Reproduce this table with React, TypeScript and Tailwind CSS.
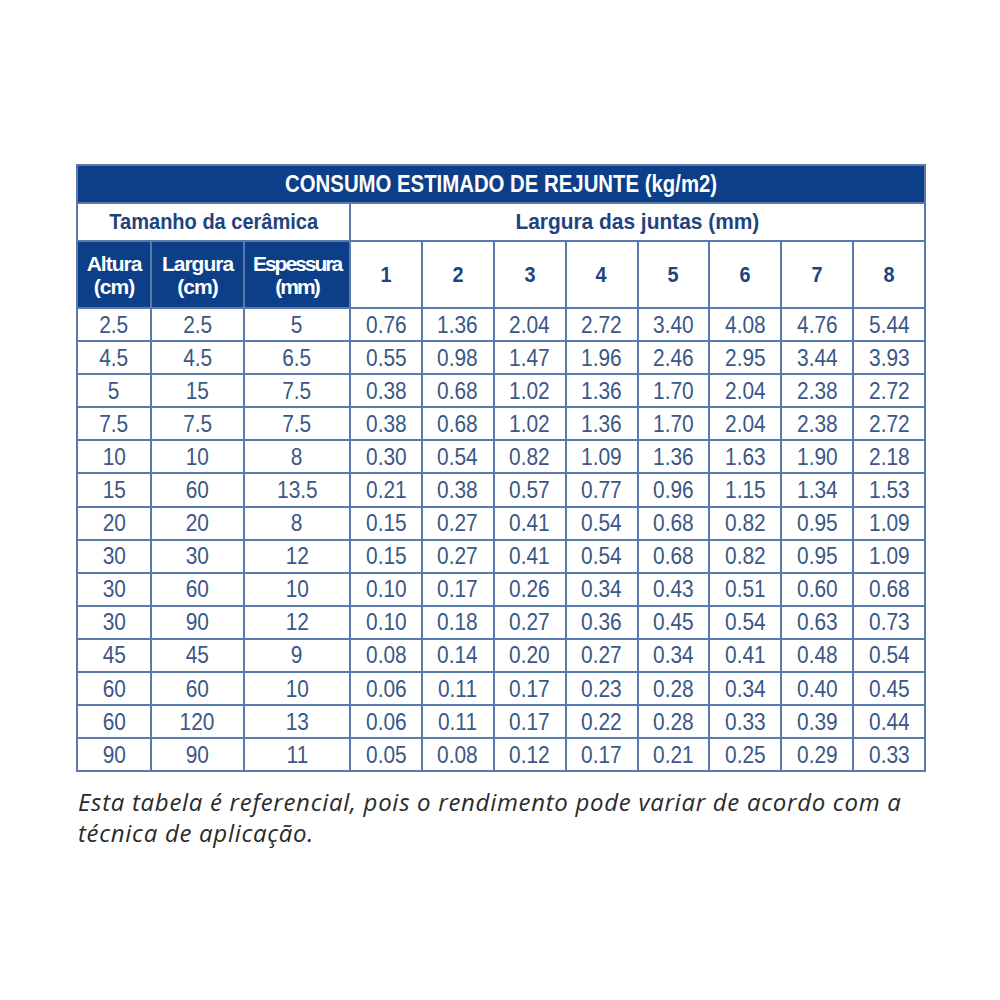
const BLUE = "bg-[#0c3f88]";

const rows: string[][] = [
  ["2.5", "2.5", "5", "0.76", "1.36", "2.04", "2.72", "3.40", "4.08", "4.76", "5.44"],
  ["4.5", "4.5", "6.5", "0.55", "0.98", "1.47", "1.96", "2.46", "2.95", "3.44", "3.93"],
  ["5", "15", "7.5", "0.38", "0.68", "1.02", "1.36", "1.70", "2.04", "2.38", "2.72"],
  ["7.5", "7.5", "7.5", "0.38", "0.68", "1.02", "1.36", "1.70", "2.04", "2.38", "2.72"],
  ["10", "10", "8", "0.30", "0.54", "0.82", "1.09", "1.36", "1.63", "1.90", "2.18"],
  ["15", "60", "13.5", "0.21", "0.38", "0.57", "0.77", "0.96", "1.15", "1.34", "1.53"],
  ["20", "20", "8", "0.15", "0.27", "0.41", "0.54", "0.68", "0.82", "0.95", "1.09"],
  ["30", "30", "12", "0.15", "0.27", "0.41", "0.54", "0.68", "0.82", "0.95", "1.09"],
  ["30", "60", "10", "0.10", "0.17", "0.26", "0.34", "0.43", "0.51", "0.60", "0.68"],
  ["30", "90", "12", "0.10", "0.18", "0.27", "0.36", "0.45", "0.54", "0.63", "0.73"],
  ["45", "45", "9", "0.08", "0.14", "0.20", "0.27", "0.34", "0.41", "0.48", "0.54"],
  ["60", "60", "10", "0.06", "0.11", "0.17", "0.23", "0.28", "0.34", "0.40", "0.45"],
  ["60", "120", "13", "0.06", "0.11", "0.17", "0.22", "0.28", "0.33", "0.39", "0.44"],
  ["90", "90", "11", "0.05", "0.08", "0.12", "0.17", "0.21", "0.25", "0.29", "0.33"],
];

const widths = ["w-[74px]", "w-[93px]", "w-[106px]"];

const sizeHeads = [
  { top: "Altura", unit: "(cm)", track: "tracking-[-1px]" },
  { top: "Largura", unit: "(cm)", track: "tracking-[-1px]" },
  { top: "Espessura", unit: "(mm)", track: "tracking-[-2px]" },
];

// the original uses a condensed face, so squeeze Liberation Sans horizontally
const Narrow = ({ children, className = "" }: { children: React.ReactNode; className?: string }) => (
  <span className={"inline-block whitespace-nowrap " + className}>{children}</span>
);

export default function App() {
  return (
    <div className="w-[1000px] h-[1000px] bg-white pt-[164px] pl-[76px] font-['Liberation_Sans',Arial,sans-serif]">
      <table className="w-[850px] table-fixed border-collapse border-2 border-[#5a7aab]">
        <colgroup>
          {widths.map((w, i) => (
            <col key={i} className={w} />
          ))}
          {Array.from({ length: 8 }).map((_, i) => (
            <col key={"j" + i} />
          ))}
        </colgroup>
        <thead>
          <tr className="h-[38px]">
            <th colSpan={11} className={BLUE + " text-white text-[23px] font-bold text-center leading-none"}>
              <Narrow className="scale-x-[0.885]">CONSUMO ESTIMADO DE REJUNTE (kg/m2)</Narrow>
            </th>
          </tr>
          <tr className="h-[38px]">
            <th colSpan={3} className="border-2 border-[#5a7aab] text-[#1e4480] text-[22px] font-bold text-center leading-none">
              <Narrow className="scale-x-[0.91]">Tamanho da cerâmica</Narrow>
            </th>
            <th colSpan={8} className="border-2 border-[#5a7aab] text-[#1e4480] text-[22px] font-bold text-center leading-none">
              <Narrow className="scale-x-[0.95]">Largura das juntas (mm)</Narrow>
            </th>
          </tr>
          <tr className="h-[67px]">
            {sizeHeads.map((h) => (
              <th key={h.top} className={BLUE + " border-2 border-[#5a7aab] text-white text-[21px] font-bold leading-[23px] text-center p-0 " + h.track}>
                {h.top}
                <br />
                {h.unit}
              </th>
            ))}
            {[1, 2, 3, 4, 5, 6, 7, 8].map((n) => (
              <th key={n} className="border-2 border-[#5a7aab] text-[#1e4480] text-[22px] font-bold text-center">
                <Narrow className="scale-x-[0.9]">{n}</Narrow>
              </th>
            ))}
          </tr>
        </thead>
        <tbody>
          {rows.map((r, i) => (
            <tr key={i} className="h-[33.1px]">
              {r.map((c, j) => (
                <td key={j} className="border-2 border-[#5a7aab] text-[#3a5786] text-[24px] text-center leading-none p-0">
                  <Narrow className="scale-x-[0.87]">{c}</Narrow>
                </td>
              ))}
            </tr>
          ))}
        </tbody>
      </table>
      <p className="mt-[14px] ml-[2px] w-[860px] text-[24px] leading-[31px] tracking-[0.7px] italic text-[#2a2a2a] font-['Open_Sans',sans-serif]">
        Esta tabela é referencial, pois o rendimento pode variar de acordo com a técnica de aplicação.
      </p>
    </div>
  );
}
